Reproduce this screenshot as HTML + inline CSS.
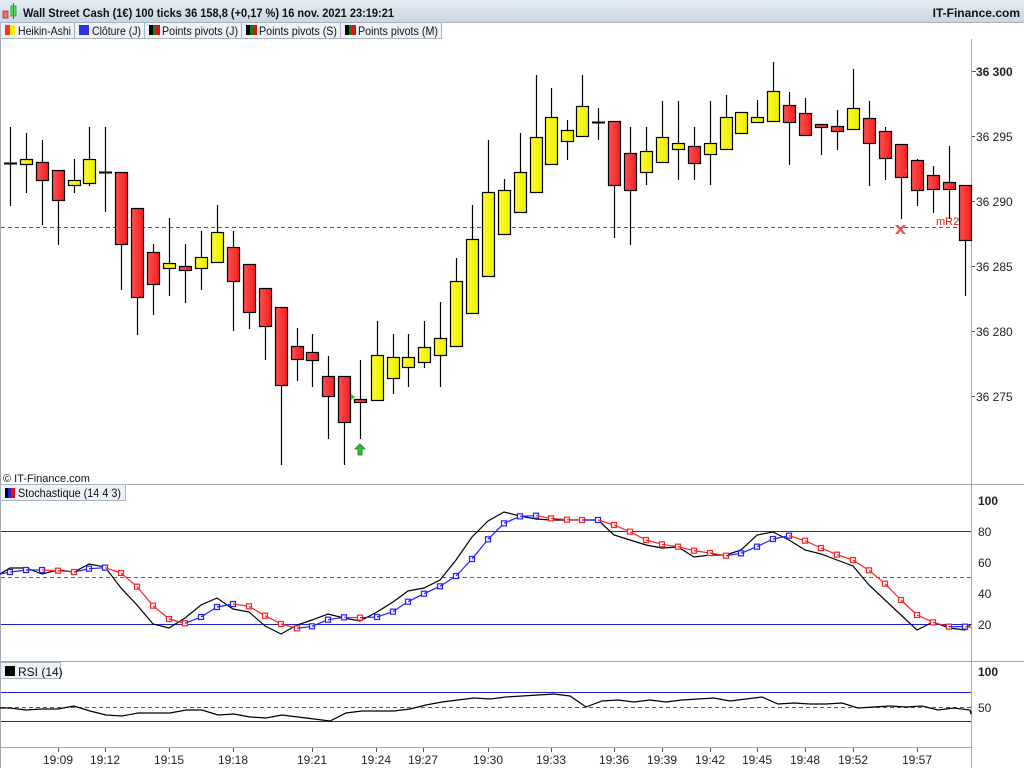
<!DOCTYPE html>
<html><head><meta charset="utf-8"><style>
html,body{margin:0;padding:0;background:#fff;}
body{width:1024px;height:768px;overflow:hidden;font-family:"Liberation Sans",sans-serif;}
svg text{font-family:"Liberation Sans",sans-serif;}
</style></head><body>
<svg id="s" width="1024" height="768" xmlns="http://www.w3.org/2000/svg">
<defs>
<linearGradient id="tb" x1="0" y1="0" x2="0" y2="1"><stop offset="0" stop-color="#e4ecf3"/><stop offset="1" stop-color="#c9d7e3"/></linearGradient>
<linearGradient id="rd" x1="0" y1="0" x2="1" y2="0"><stop offset="0" stop-color="#ff5050"/><stop offset="1" stop-color="#f02020"/></linearGradient>
<linearGradient id="yl" x1="0" y1="0" x2="1" y2="0"><stop offset="0" stop-color="#fbfb30"/><stop offset="1" stop-color="#eeee00"/></linearGradient>
</defs>
<rect x="0" y="0" width="1024" height="768" fill="#fff"/>
<rect x="0" y="0" width="1024" height="22" fill="url(#tb)"/>
<rect x="3" y="11" width="5" height="7" fill="#f07070" stroke="#a03030" stroke-width="0.8"/>
<rect x="11" y="6" width="5" height="10" fill="#60e060" stroke="#209020" stroke-width="0.8"/>
<line x1="13.5" y1="3" x2="13.5" y2="19" stroke="#209020"/>
<text x="23" y="17" font-size="12" font-weight="bold" fill="#111" textLength="371" lengthAdjust="spacingAndGlyphs">Wall Street Cash (1€) 100 ticks 36 158,8 (+0,17 %) 16 nov. 2021 23:19:21</text>
<text x="1020" y="17" font-size="12" font-weight="bold" fill="#111" text-anchor="end">IT-Finance.com</text>
<rect x="0" y="22" width="1024" height="17" fill="#fff"/>
<line x1="0" y1="22.5" x2="1024" y2="22.5" stroke="#a8b4c0"/>
<g font-size="12" fill="#111">
<rect x="0.5" y="22.5" width="74" height="16" fill="#eef2f6" stroke="#a8b4c0"/>
<rect x="5" y="25" width="5" height="10" fill="#ff3030"/><rect x="10" y="25" width="5" height="10" fill="#f5f000"/>
<text x="18" y="35" textLength="53" lengthAdjust="spacingAndGlyphs">Heikin-Ashi</text>
<rect x="74.5" y="22.5" width="70" height="16" fill="#eef2f6" stroke="#a8b4c0"/>
<rect x="79" y="25" width="10" height="10" fill="#3030e0"/>
<text x="92" y="35" textLength="49" lengthAdjust="spacingAndGlyphs">Clôture (J)</text>
<rect x="144.5" y="22.5" width="97" height="16" fill="#eef2f6" stroke="#a8b4c0"/>
<rect x="149" y="25" width="4" height="10" fill="#000"/><rect x="153" y="25" width="3" height="10" fill="#108010"/><rect x="156" y="25" width="4" height="10" fill="#e01010"/>
<text x="162" y="35" textLength="76" lengthAdjust="spacingAndGlyphs">Points pivots (J)</text>
<rect x="241.5" y="22.5" width="99" height="16" fill="#eef2f6" stroke="#a8b4c0"/>
<rect x="246" y="25" width="4" height="10" fill="#000"/><rect x="250" y="25" width="3" height="10" fill="#108010"/><rect x="253" y="25" width="4" height="10" fill="#e01010"/>
<text x="259" y="35" textLength="78" lengthAdjust="spacingAndGlyphs">Points pivots (S)</text>
<rect x="340.5" y="22.5" width="101" height="16" fill="#eef2f6" stroke="#a8b4c0"/>
<rect x="345" y="25" width="4" height="10" fill="#000"/><rect x="349" y="25" width="3" height="10" fill="#108010"/><rect x="352" y="25" width="4" height="10" fill="#e01010"/>
<text x="358" y="35" textLength="80" lengthAdjust="spacingAndGlyphs">Points pivots (M)</text>
</g>
<line x1="0.5" y1="39" x2="0.5" y2="768" stroke="#a0aab4"/>
<line x1="971.5" y1="39" x2="971.5" y2="768" stroke="#a0aab4"/>
<line x1="0" y1="484.5" x2="1024" y2="484.5" stroke="#a0aab4"/>
<line x1="0" y1="661.5" x2="1024" y2="661.5" stroke="#a0aab4"/>
<line x1="0" y1="747.5" x2="972" y2="747.5" stroke="#a0aab4"/>
<g font-size="12" fill="#222">
<text x="976" y="76" font-weight="bold">36 300</text>
<text x="976" y="141">36 295</text>
<text x="976" y="206">36 290</text>
<text x="976" y="271">36 285</text>
<text x="976" y="336">36 280</text>
<text x="976" y="401">36 275</text>
</g>
<g stroke="#555"><line x1="972" y1="71.5" x2="976" y2="71.5"/><line x1="972" y1="136.5" x2="975" y2="136.5"/><line x1="972" y1="201.5" x2="975" y2="201.5"/><line x1="972" y1="266.5" x2="975" y2="266.5"/><line x1="972" y1="331.5" x2="975" y2="331.5"/><line x1="972" y1="396.5" x2="975" y2="396.5"/></g>
<line x1="1" y1="227.5" x2="971" y2="227.5" stroke="#e02020" stroke-dasharray="4,3"/>
<text x="936" y="225" font-size="11" fill="#e02020">mR2 J</text>
<g id="cd"></g>
<path d="M895,225 l3,0 l2.5,3 l2.5,-3 l3,0 l-4,4.5 l4,4.5 l-3,0 l-2.5,-3 l-2.5,3 l-3,0 l4,-4.5z" fill="#e05050"/>
<path d="M360,444 l5,5 h-3 v6 h-4 v-6 h-3z" fill="#30c030" stroke="#108010" stroke-width="0.8"/>
<path d="M351,394 l4,3 l-4,3z" fill="#30c030"/>
<path d="M907,168 l-4,3 l4,3z" fill="#e05050"/>
<text x="3" y="482" font-size="11" fill="#111">© IT-Finance.com</text>
<rect x="0.5" y="484.5" width="125" height="16" fill="#eef2f6" stroke="#a8b4c0"/>
<rect x="5" y="488" width="3" height="10" fill="#000"/><rect x="8" y="488" width="3" height="10" fill="#2020e0"/><rect x="11" y="488" width="4" height="10" fill="#e01010"/>
<text x="18" y="497" font-size="12" fill="#111" textLength="103" lengthAdjust="spacingAndGlyphs">Stochastique (14 4 3)</text>
<line x1="1" y1="531.5" x2="971" y2="531.5" stroke="#2828b0"/>
<line x1="1" y1="577.5" x2="971" y2="577.5" stroke="#e03030" stroke-dasharray="4,3"/>
<line x1="1" y1="624.5" x2="971" y2="624.5" stroke="#2020d0"/>
<g font-size="12" fill="#222">
<text x="978" y="505" font-weight="bold">100</text>
<text x="978" y="536">80</text><text x="978" y="567">60</text><text x="978" y="598">40</text><text x="978" y="629">20</text>
</g>
<g id="st"></g>
<rect x="0.5" y="662.5" width="60" height="16" fill="#eef2f6" stroke="#a8b4c0"/>
<rect x="5" y="666" width="10" height="10" fill="#000"/>
<text x="18" y="676" font-size="12" fill="#111">RSI (14)</text>
<line x1="1" y1="692.5" x2="971" y2="692.5" stroke="#2020d0"/>
<line x1="1" y1="707.5" x2="971" y2="707.5" stroke="#e02020" stroke-dasharray="4,3"/>
<line x1="1" y1="721.5" x2="971" y2="721.5" stroke="#2020d0"/>
<g font-size="12" fill="#222"><text x="978" y="676" font-weight="bold">100</text><text x="978" y="712">50</text></g>
<g id="rs"></g>
<g id="tx" font-size="12" fill="#222" text-anchor="middle"></g>
</svg>
<script>
var NS="http://www.w3.org/2000/svg";
function el(p,t,a){var e=document.createElementNS(NS,t);for(var k in a)e.setAttribute(k,a[k]);p.appendChild(e);return e;}
var C=[[10,127,163,163,206,'d'],[26,133,159,164,193,'y'],[42,140,162,180,225,'r'],[58,170,170,200,245,'r'],[74,159,180,185,193,'y'],[89,127,159,183,186,'y'],[105,127,172,172,212,'d'],[121,172,172,244,290,'r'],[137,208,208,297,335,'r'],[153,244,252,284,315,'r'],[169,218,263,268,296,'y'],[185,244,266,270,303,'r'],[201,231,257,268,290,'y'],[217,205,232,262,262,'y'],[233,231,247,281,331,'r'],
[249,270,264,312,329,'r'],[265,288,288,326,360,'r'],[281,307,307,385,465,'r'],[297,328,346,359,381,'r'],[312,334,352,360,387,'r'],[328,356,376,396,439,'r'],[344,376,376,422,465,'r'],[360,360,399,401,439,'r'],[377,321,355,400,400,'y'],[393,334,357,378,394,'y'],[408,334,357,367,387,'y'],[424,321,347,362,368,'y'],[440,302,338,355,387,'y'],[456,258,281,346,346,'y'],[472,205,239,313,313,'y'],
[488,140,192,276,276,'y'],[504,179,190,234,234,'y'],[520,133,172,212,212,'y'],[536,75,137,192,192,'y'],[551,88,117,164,164,'y'],[567,120,130,141,160,'y'],[582,75,106,136,136,'y'],[598,108,122,122,140,'d'],[614,121,121,185,238,'r'],[630,127,153,190,245,'r'],[646,127,151,172,185,'y'],[662,101,137,162,162,'y'],[678,101,143,149,180,'y'],[694,127,146,163,180,'r'],[710,101,143,154,185,'y'],[726,95,117,149,149,'y'],[741,112,112,133,133,'y'],[757,100,117,122,122,'y'],[773,62,91,121,121,'y'],[789,92,105,122,165,'r'],[805,98,113,135,135,'r'],[821,124,124,127,155,'r'],[837,110,126,131,150,'r'],
[853,69,108,129,129,'y'],[869,101,118,143,186,'r'],[885,127,131,158,180,'r'],[901,144,144,177,219,'r'],[917,159,160,190,206,'r'],[933,166,175,189,213,'r'],[949,146,182,189,219,'r'],[965,185,185,240,296,'r']];
var g=document.getElementById('cd');
C.forEach(function(c){
 el(g,'line',{x1:c[0]+.5,x2:c[0]+.5,y1:c[1],y2:c[4],stroke:'#000','stroke-width':1.2});
 if(c[5]=='d'){el(g,'line',{x1:c[0]-6,x2:c[0]+7,y1:c[2]+.5,y2:c[2]+.5,stroke:'#000','stroke-width':2});}
 else{var h=Math.max(c[3]-c[2],3);el(g,'rect',{x:c[0]-5.5,y:c[2]+.5,width:12,height:h,fill:c[5]=='r'?'url(#rd)':'url(#yl)',stroke:'#000','stroke-width':1.2});}
});
var K=[[0,574],[10,568],[26,568],[42,574],[58,570],[74,572],[89,564],[105,567],[121,588],[137,605],[153,624],[169,628],[185,618],[201,605],[217,598],[233,609],[249,612],[265,626],[281,634],[297,625],[312,620],[328,614],[344,618],[360,621],[377,612],[393,602],[408,591],[424,588],[440,580],[456,560],[472,537],[488,521],[504,512],[520,516],[536,519],[551,520],[567,520],[582,520],[598,520],[614,535],[630,540],[646,545],[662,548],[678,547],[694,557],[710,555],[726,555],[741,550],[757,535],[773,532],[789,540],[805,550],[821,554],[837,560],[853,566],[869,585],[885,600],[901,615],[917,630],[933,622],[949,628],[965,630],[971,624]];
var sg=document.getElementById('st');
el(sg,'polyline',{points:K.map(function(p){return p.join(',')}).join(' '),fill:'none',stroke:'#000','stroke-width':1.2});
var D=[];for(var i=0;i<K.length;i++){var a=K[Math.max(0,i-2)][1],b=K[Math.max(0,i-1)][1],c=K[i][1];D.push([K[i][0],(a+b+c)/3]);}
for(var i=1;i<D.length;i++){var col=D[i][1]>D[i-1][1]+0.3?'#ff2020':'#2020ff';
 el(sg,'line',{x1:D[i-1][0],y1:D[i-1][1],x2:D[i][0],y2:D[i][1],stroke:col,'stroke-width':1.2});
 if(i<D.length-1)el(sg,'rect',{x:D[i][0]-2.5,y:D[i][1]-2.5,width:5,height:5,fill:'#fff',stroke:col,'stroke-width':1.2});}
var R=[708,708,710,709,709,706,711,715,716,713,713,713,710,710,715,714,717,718,715,717,719,721,713,711,711,711,709,705,702,700,698,699,697,696,695,694,696,707,701,700,702,700,702,700,699,698,701,699,697,704,703,704,704,703,708,707,706,707,706,710,708,710,714,711];
el(document.getElementById('rs'),'polyline',{points:R.map(function(v,i){return (i==0?0:Math.min(971,-6+i*16))+','+v}).join(' '),fill:'none',stroke:'#000','stroke-width':1.2});
var T=[[58,'19:09'],[105,'19:12'],[169,'19:15'],[233,'19:18'],[312,'19:21'],[376,'19:24'],[423,'19:27'],[488,'19:30'],[551,'19:33'],[614,'19:36'],[662,'19:39'],[710,'19:42'],[757,'19:45'],[805,'19:48'],[853,'19:52'],[917,'19:57']];
var tx=document.getElementById('tx');
T.forEach(function(t){el(tx,'line',{x1:t[0]+.5,x2:t[0]+.5,y1:748,y2:752,stroke:'#555'});var e=el(tx,'text',{x:t[0],y:764});e.textContent=t[1];});
</script>
</body></html>
